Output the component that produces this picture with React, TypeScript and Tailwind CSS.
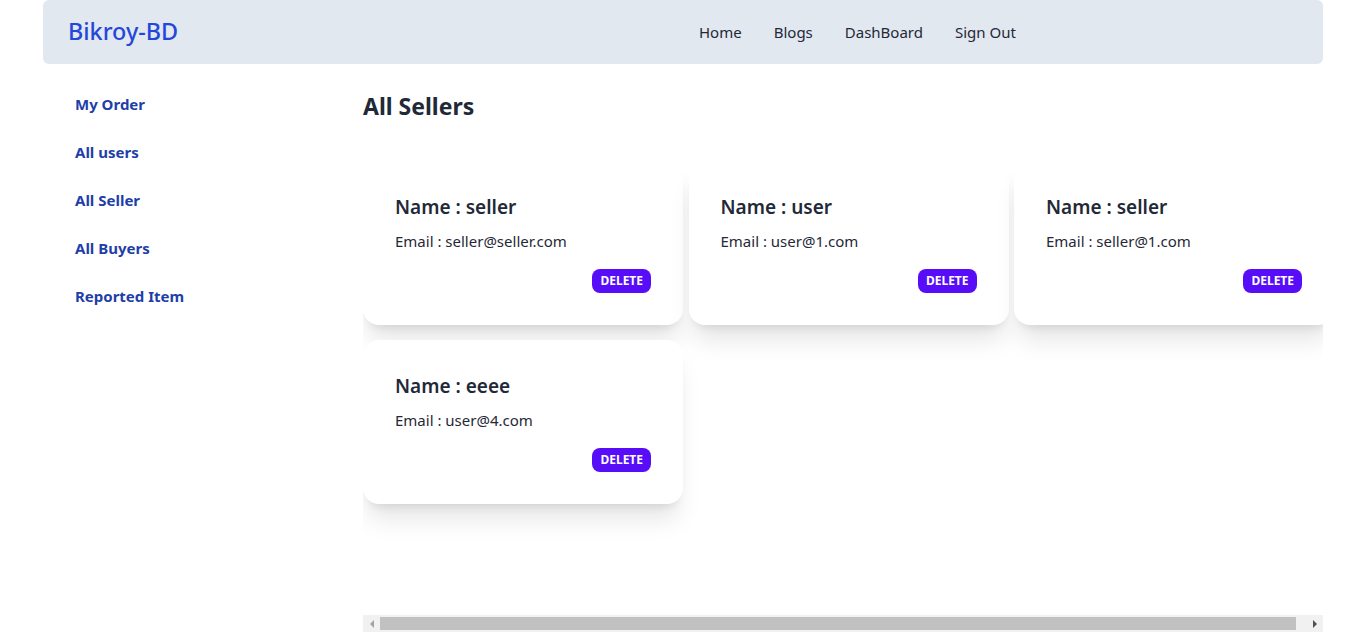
import React from 'react';

const sellers = [
  { name: 'seller', email: 'seller@seller.com' },
  { name: 'user', email: 'user@1.com' },
  { name: 'seller', email: 'seller@1.com' },
  { name: 'eeee', email: 'user@4.com' },
];

const sideLinks = ['My Order', 'All users', 'All Seller', 'All Buyers', 'Reported Item'];
const navLinks = ['Home', 'Blogs', 'DashBoard', 'Sign Out'];

const App: React.FC = () => {
  return (
    <div className="min-h-screen bg-white font-['Noto_Sans',sans-serif]">
      <div className="max-w-7xl mx-auto">
        {/* navbar */}
        <nav className="flex items-center h-16 bg-[#e2e8f0] rounded-md">
          <div className="w-1/2 pl-[25px]">
            <a href="#" className="text-[23.4px] font-medium text-[#2547d9]">
              Bikroy-BD
            </a>
          </div>
          <ul className="flex items-center">
            {navLinks.map((link) => (
              <li key={link}>
                <a href="#" className="block px-4 py-2 text-[15px] text-[#1f2937]">
                  {link}
                </a>
              </li>
            ))}
          </ul>
        </nav>

        <div className="flex">
          {/* sidebar */}
          <aside className="w-80 shrink-0 p-4">
            <ul className="flex flex-col">
              {sideLinks.map((link) => (
                <li key={link}>
                  <a href="#" className="block px-4 py-3 text-[15px] leading-6 font-bold text-[#1e3ea8]">
                    {link}
                  </a>
                </li>
              ))}
            </ul>
          </aside>

          {/* main */}
          <main className="w-[960px] pt-[26px]">
            <h2 className="text-[23px] leading-8 font-bold text-[#1f2937]">All Sellers</h2>
            <div className="mt-[28px] h-[465px] overflow-hidden">
              <div className="grid grid-cols-[repeat(3,320px)] gap-x-[5.5px] gap-y-[15px] pt-[11px] pr-[9px] w-max">
                {sellers.map((s, i) => (
                  <div key={i} className="bg-white rounded-2xl shadow-xl">
                    <div className="p-8 flex flex-col">
                      <h3 className="text-[19px] font-semibold text-[#1f2937] leading-7">
                        Name : {s.name}
                      </h3>
                      <p className="mt-2 text-[15px] leading-6 text-[#1f2937]">Email : {s.email}</p>
                      <div className="mt-4 flex justify-end">
                        <button className="h-6 px-2 rounded-lg bg-[#570df8] text-white text-xs font-bold uppercase">
                          Delete
                        </button>
                      </div>
                    </div>
                  </div>
                ))}
              </div>
            </div>
            {/* horizontal scrollbar */}
            <div className="flex items-center h-[17px] bg-[#f1f1f1]">
              <div className="w-[17px] h-full flex items-center justify-center">
                <div className="w-0 h-0 border-y-[4px] border-y-transparent border-r-[4px] border-r-[#a3a3a3]" />
              </div>
              <div className="flex-1 h-[13px] bg-[#c1c1c1]" />
              <div className="w-[10px]" />
              <div className="w-[17px] h-full flex items-center justify-center">
                <div className="w-0 h-0 border-y-[4px] border-y-transparent border-l-[4px] border-l-[#505050]" />
              </div>
            </div>
          </main>
        </div>
      </div>
    </div>
  );
};

export default App;
